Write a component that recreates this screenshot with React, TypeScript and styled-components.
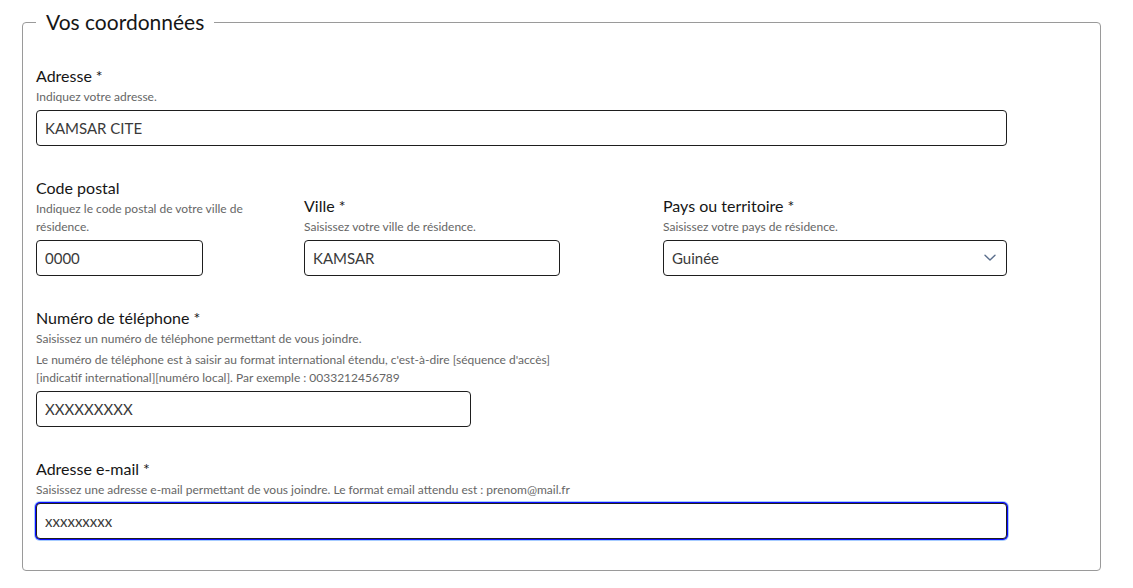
import React from "react";
import styled, { createGlobalStyle } from "styled-components";

const GlobalStyle = createGlobalStyle`
  html, body {
    margin: 0;
    padding: 0;
    background: #ffffff;
  }
  body {
    font-family: Lato, "Open Sans", Arial, sans-serif;
    color: #161616;
  }
`;

const Page = styled.div`
  padding: 10px 32px 16px 22px;
`;

const Fieldset = styled.fieldset`
  margin: 0;
  border: 1px solid #9a9a9a;
  border-radius: 4px;
  padding: 32px 13px 31px 13px;
  min-width: 0;
`;

const Legend = styled.legend`
  padding: 0 10px;
  font-size: 21px;
  line-height: 24px;
  font-weight: 400;
  color: #161616;
`;

const Stack = styled.div`
  display: flex;
  flex-direction: column;
  gap: 32px;
`;

const Row = styled.div`
  display: grid;
  grid-template-columns: 268px 359px 344px;
  align-items: end;
`;

const Field = styled.div<{ $inputWidth?: string }>`
  display: flex;
  flex-direction: column;
  width: ${(p) => p.$inputWidth || "971px"};
`;

const Label = styled.label`
  font-size: 16px;
  line-height: 20px;
  color: #161616;
  margin-bottom: 2px;
`;

const Hint = styled.p<{ $width?: string }>`
  margin: 0 0 3px 0;
  font-size: 12px;
  line-height: 18px;
  color: #666666;
  width: ${(p) => p.$width || "auto"};
  &:last-of-type {
    margin-bottom: 4px;
  }
`;

const Input = styled.input<{ $focused?: boolean }>`
  box-sizing: border-box;
  width: 100%;
  height: 36px;
  margin: 0;
  padding: 0 8px;
  font-family: Lato, "Open Sans", Arial, sans-serif;
  font-size: 15px;
  color: #3a3a3a;
  background: #ffffff;
  border: 1px solid #1e1e1e;
  border-radius: 4px;
  outline: none;
  box-shadow: ${(p) =>
    p.$focused ? "0 0 0 1px #0a0aff, 0 0 0 2px #a6ccff" : "none"};
  &:focus {
    outline: none;
  }
`;

const SelectWrap = styled.div`
  position: relative;
  width: 100%;
`;

const Select = styled.select`
  box-sizing: border-box;
  width: 100%;
  height: 36px;
  padding: 0 30px 0 8px;
  font-family: Lato, "Open Sans", Arial, sans-serif;
  font-size: 15px;
  color: #3a3a3a;
  background: #ffffff;
  border: 1px solid #1e1e1e;
  border-radius: 4px;
  appearance: none;
  -webkit-appearance: none;
  outline: none;
`;

const Chevron = styled.svg`
  position: absolute;
  right: 11px;
  top: 14px;
  pointer-events: none;
`;

export default function App() {
  return (
    <>
      <GlobalStyle />
      <Page>
        <Fieldset>
          <Legend>Vos coordonnées</Legend>
          <Stack>
            <Field>
              <Label htmlFor="adresse">Adresse&#8239;*</Label>
              <Hint>Indiquez votre adresse.</Hint>
              <Input id="adresse" defaultValue="KAMSAR CITE" />
            </Field>

            <Row>
              <Field $inputWidth="167px">
                <Label htmlFor="cp">Code postal</Label>
                <Hint $width="236px">
                  Indiquez le code postal de votre ville de résidence.
                </Hint>
                <Input id="cp" defaultValue="0000" />
              </Field>
              <Field $inputWidth="256px">
                <Label htmlFor="ville">Ville&#8239;*</Label>
                <Hint>Saisissez votre ville de résidence.</Hint>
                <Input id="ville" defaultValue="KAMSAR" />
              </Field>
              <Field $inputWidth="344px">
                <Label htmlFor="pays">Pays ou territoire&#8239;*</Label>
                <Hint>Saisissez votre pays de résidence.</Hint>
                <SelectWrap>
                  <Select id="pays" defaultValue="GN">
                    <option value="GN">Guinée</option>
                  </Select>
                  <Chevron width="12" height="8" viewBox="0 0 12 8">
                    <path
                      d="M1 1.2 L6 6 L11 1.2"
                      fill="none"
                      stroke="#5a6e8c"
                      strokeWidth="1.4"
                      strokeLinecap="round"
                      strokeLinejoin="round"
                    />
                  </Chevron>
                </SelectWrap>
              </Field>
            </Row>

            <Field $inputWidth="435px">
              <Label htmlFor="tel">Numéro de téléphone&#8239;*</Label>
              <Hint>
                Saisissez un numéro de téléphone permettant de vous joindre.
              </Hint>
              <Hint $width="640px">
                Le numéro de téléphone est à saisir au format international
                étendu, c'est-à-dire [séquence d'accès]
                <br />
                [indicatif international][numéro local]. Par exemple&#8239;:
                0033212456789
              </Hint>
              <Input id="tel" defaultValue="XXXXXXXXX" />
            </Field>

            <Field>
              <Label htmlFor="email">Adresse e-mail&#8239;*</Label>
              <Hint>
                Saisissez une adresse e-mail permettant de vous joindre. Le
                format email attendu est : prenom@mail.fr
              </Hint>
              <Input id="email" $focused defaultValue="xxxxxxxxx" />
            </Field>
          </Stack>
        </Fieldset>
      </Page>
    </>
  );
}
